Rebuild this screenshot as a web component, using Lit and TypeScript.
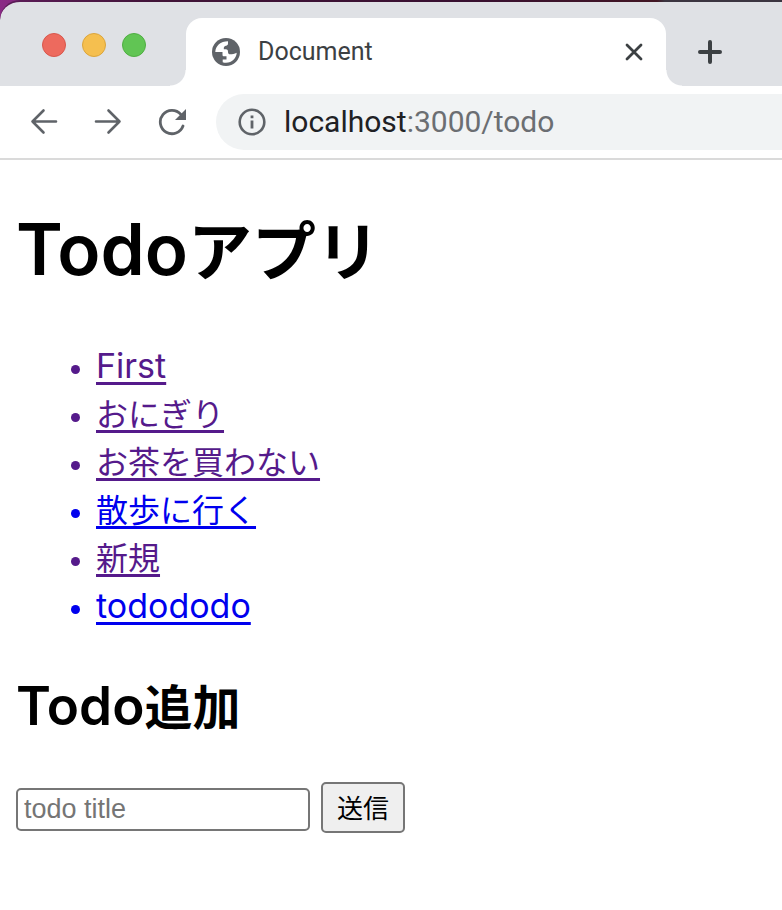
import { LitElement, html, css } from "lit";
import { customElement, state } from "lit/decorators.js";
import { classMap } from "lit/directives/class-map.js";

interface Todo {
  title: string;
  visited: boolean;
  latin?: boolean;
}

@customElement("browser-chrome")
class BrowserChrome extends LitElement {
  static styles = css`
    :host {
      display: block;
      font-family: Roboto, "Noto Sans CJK JP", sans-serif;
      background: linear-gradient(90deg, #8a2a85, #5a1a4c 20%, #4c1440 60%, #5c1f2c 84%, #50525a 85%);
    }
    .strip {
      display: flex;
      height: 84px;
      border-top: 2px solid #1c0a1866;
      border-top-left-radius: 20px;
      background: #dfe1e5;
      background-clip: padding-box;
    }
    .lights {
      display: flex;
      gap: 16px;
      padding: 31px 40px 0 42px;
    }
    .light {
      box-sizing: border-box;
      width: 24px;
      height: 24px;
      padding: 0;
      border: 1px solid;
      border-radius: 50%;
    }
    .close { background: #ed6a5e; border-color: #d8574c; }
    .min { background: #f5bf4f; border-color: #dba53c; }
    .max { background: #61c554; border-color: #4fae42; }
    .tab {
      position: relative;
      display: flex;
      align-items: center;
      box-sizing: border-box;
      width: 480px;
      height: 68px;
      margin-top: 16px;
      padding: 0 20px 0 26px;
      border-radius: 16px 16px 0 0;
      background: #fff;
    }
    .tab::before,
    .tab::after {
      content: "";
      position: absolute;
      bottom: 0;
      width: 16px;
      height: 16px;
    }
    .tab::before {
      right: 100%;
      background: radial-gradient(circle at 0 0, transparent 15px, #fff 16px);
    }
    .tab::after {
      left: 100%;
      background: radial-gradient(circle at 100% 0, transparent 15px, #fff 16px);
    }
    .title {
      flex: 1;
      margin-left: 18px;
      font-size: 25px;
      line-height: 32px;
      color: #3c4043;
    }
    .icon {
      display: flex;
      padding: 0;
      border: 0;
      background: none;
    }
    svg { display: block; }
    .new {
      align-self: center;
      margin: 16px 0 0 32px;
    }
    .bar {
      display: flex;
      align-items: center;
      gap: 36px;
      height: 72px;
      padding-left: 30px;
      border-bottom: 2px solid #dadada;
      background: #fff;
    }
    .address {
      flex: 1;
      display: flex;
      align-items: center;
      gap: 18px;
      height: 56px;
      margin-left: -6px;
      padding-left: 22px;
      border-radius: 28px 0 0 28px;
      background: #f1f3f4;
      font-size: 30px;
      line-height: 36px;
      color: #6b6e72;
    }
    .host { color: #202124; }
  `;

  render() {
    return html`
      <div class="strip">
        <div class="lights">
          <button class="light close" aria-label="Close window"></button>
          <button class="light min" aria-label="Minimize"></button>
          <button class="light max" aria-label="Zoom"></button>
        </div>
        <div class="tab">
          <svg width="28" height="28" viewBox="0 0 28 28" aria-hidden="true">
            <circle cx="14" cy="14" r="14" fill="#5f6368" />
            <path fill="#fff" d="M3.300 14C3.500 8 8.500 3.300 16 3.300V5.500c0 1.500-.8 2-2 2.200S11.800 9 11.800 10v1.300h2c1.800 0 2.200 1 2.200 2.700 0 1.600.8 2.300 2.300 2.300 2 0 4-.3 6.400-1.600C24.500 20 20 24.700 14 24.700c-1.200 0-2.300-.1-3.300-.5V21.500h3.800v-3.300h-2.500c-1 0-1.500-.5-1.500-1.500V14z" />
          </svg>
          <span class="title">Document</span>
          <button class="icon" aria-label="Close tab">
            <svg width="24" height="24" viewBox="0 0 24 24" fill="none" stroke="#3c4043" stroke-width="2.800" stroke-linecap="round">
              <path d="M5 5l14 14M19 5L5 19" />
            </svg>
          </button>
        </div>
        <button class="icon new" aria-label="New tab">
          <svg width="24" height="24" viewBox="0 0 24 24" fill="none" stroke="#3c4043" stroke-width="4" stroke-linecap="round">
            <path d="M12 2v20M2 12h20" />
          </svg>
        </button>
      </div>
      <div class="bar">
        <button class="icon" aria-label="Back">
          <svg width="28" height="28" viewBox="0 0 28 28" fill="none" stroke="#5f6368" stroke-width="2.600" stroke-linecap="round" stroke-linejoin="round">
            <path d="M26 13.500H2.500M13.500 2.500l-11 11 11 11" />
          </svg>
        </button>
        <button class="icon" aria-label="Forward">
          <svg width="28" height="28" viewBox="0 0 28 28" fill="none" stroke="#5f6368" stroke-width="2.600" stroke-linecap="round" stroke-linejoin="round">
            <path d="M2 13.500h23.500M14.500 2.500l11 11-11 11" />
          </svg>
        </button>
        <button class="icon" aria-label="Reload">
          <svg width="28" height="28" viewBox="0 0 28 28" fill="none">
            <path d="M25 18A11.700 11.700 0 1 1 22.800 6.300" stroke="#5f6368" stroke-width="2.800" stroke-linecap="round" />
            <path d="M28 1v11H17z" fill="#5f6368" />
          </svg>
        </button>
        <div class="address">
          <svg width="28" height="28" viewBox="0 0 28 28" aria-hidden="true">
            <circle cx="14" cy="14" r="12.300" fill="none" stroke="#5f6368" stroke-width="2.600" />
            <path d="M12.600 7.500h2.800v2.800h-2.800zM12.600 12.600h2.800v8h-2.800z" fill="#5f6368" />
          </svg>
          <span><span class="host">localhost</span>:3000/todo</span>
        </div>
      </div>
    `;
  }
}

@customElement("app-root")
class AppRoot extends LitElement {
  @state() private todos: Todo[] = [
    { title: "First", visited: true, latin: true },
    { title: "おにぎり", visited: true },
    { title: "お茶を買わない", visited: true },
    { title: "散歩に行く", visited: false },
    { title: "新規", visited: true },
    { title: "todododo", visited: false, latin: true },
  ];

  static styles = css`
    :host {
      display: block;
      min-height: 100vh;
      background: #fff;
      color: #000;
      font-family: "Noto Sans CJK JP", sans-serif;
    }
    main { padding: 39px 16px; }
    h1, h2 { margin: 0; font-weight: 700; }
    h1 { font-size: 64px; line-height: 96px; }
    h2 { font-size: 48px; line-height: 72px; }
    .latin { font-family: Inter, sans-serif; font-weight: 600; }
    h1 .latin { font-size: 71px; line-height: 71px; }
    h2 .latin { font-size: 53px; line-height: 53px; }
    ul {
      margin: 45px 0 40px;
      padding-left: 80px;
      font-size: 32px;
      line-height: 48px;
    }
    li { color: #0000ee; }
    li.visited { color: #551a8b; }
    li::marker { font-size: 24px; }
    li a {
      color: inherit;
      text-decoration-thickness: 3px;
      text-underline-offset: 4px;
      text-decoration-skip-ink: none;
    }
    li .word {
      font-family: Inter, sans-serif;
      font-size: 34px;
      line-height: 34px;
      font-weight: 400;
    }
    form {
      display: flex;
      align-items: baseline;
      gap: 11px;
      margin-top: 42px;
    }
    input {
      box-sizing: border-box;
      width: 294px;
      height: 43px;
      padding: 0 6px;
      border: 2px solid #767676;
      border-radius: 5px;
      font: 27px "Liberation Sans", sans-serif;
    }
    input::placeholder { color: #757575; }
    .send {
      box-sizing: border-box;
      height: 51px;
      padding: 0 14px 2px;
      border: 2px solid #767676;
      border-radius: 5px;
      background: #efefef;
      color: #000;
      font: 26px "Noto Sans CJK JP", sans-serif;
    }
  `;

  render() {
    return html`
      <browser-chrome></browser-chrome>
      <main>
        <h1><span class="latin">Todo</span>アプリ</h1>
        <ul>
          ${this.todos.map(
            (t) => html`<li class=${classMap({ visited: t.visited })}><a class=${classMap({ word: !!t.latin })} href="#">${t.title}</a></li>`
          )}
        </ul>
        <h2><span class="latin">Todo</span>追加</h2>
        <form @submit=${(e: Event) => e.preventDefault()}>
          <input type="text" aria-label="todo title" placeholder="todo title" />
          <button class="send">送信</button>
        </form>
      </main>
    `;
  }
}
